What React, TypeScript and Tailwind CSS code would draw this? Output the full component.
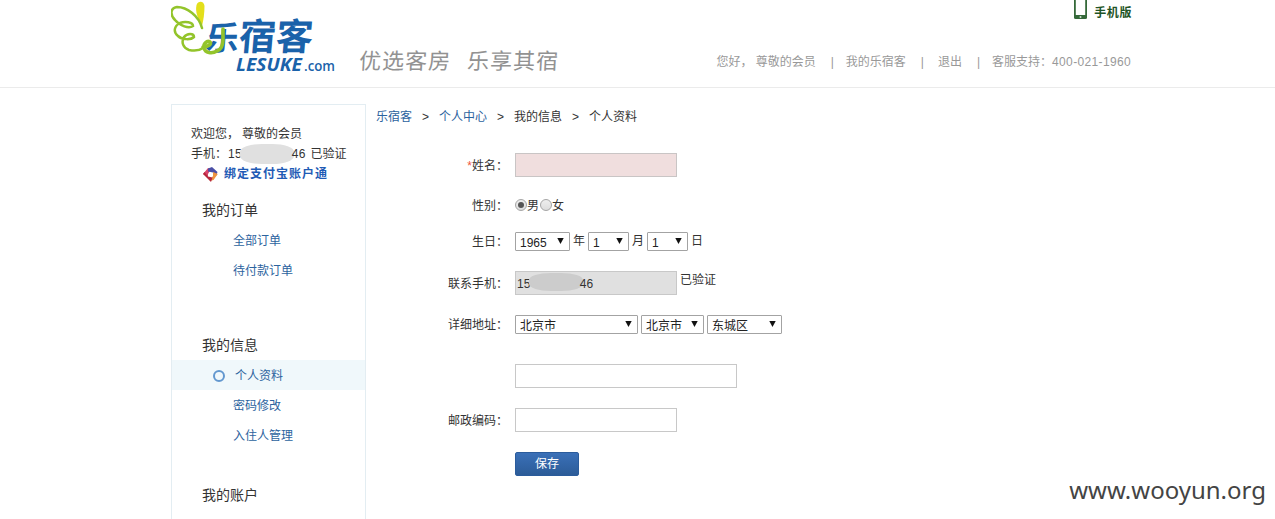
import type { ReactNode } from "react";
import clsx from "clsx";

const menu = [
  { title: "我的订单", items: ["全部订单", "待付款订单"], space: "mb-[45px]" },
  { title: "我的信息", items: ["个人资料", "密码修改", "入住人管理"], space: "mb-[30px]" },
  { title: "我的账户", items: [], space: "" },
];

const crumbs = [
  { text: "乐宿客", link: true },
  { text: "个人中心", link: true },
  { text: "我的信息", link: false },
  { text: "个人资料", link: false },
];

function Logo() {
  return (
    <svg width="170" height="80" viewBox="0 0 170 80" className="shrink-0">
      <g fill="#1a62aa" className="font-['Noto_Sans_CJK_SC',sans-serif] font-bold">
        <text transform="translate(34 49.500) skewX(-5)" fontSize="33">乐</text>
        <text transform="translate(67 50) skewX(-5)" fontSize="37">宿客</text>
      </g>
      {/* wing */}
      <path d="M25.500 5C27 .5 33 .5 33.500 6c0 7-1 14-2.500 20C27 19 24 12 25.500 5z" fill="#e3df1b" />
      <g fill="none" stroke="#93c42b" strokeLinecap="round">
        <path
          d="M31 28C28 16 16 7 6 7-1 8-1 15 4 20c5 6 14 9 18 6 0-4-8-5-13-3-6 3-7 9-2 13 4 4 13 4 16 1 0-4-7-4-10 0-3 5-1 11 5 13 5 1 10 1 14-2"
          strokeWidth="2.500"
        />
        <path d="M32 47c5 0 9-3 7-5-3-2-7 2-6 6 1 5 8 6 13 3 5-2 6-6 6-11V29" strokeWidth="3.600" />
      </g>
      <text x="65" y="70.500" fontSize="17" textLength="66" lengthAdjust="spacingAndGlyphs" fill="#1a62aa" className="font-['Open_Sans',sans-serif] font-bold italic">
        LESUKE
      </text>
      <text x="133" y="70.500" fontSize="14" textLength="31" lengthAdjust="spacingAndGlyphs" fill="#1a62aa" className="font-['Open_Sans',sans-serif] font-semibold">
        .com
      </text>
    </svg>
  );
}

function PhoneIcon() {
  return (
    <svg width="13" height="20" viewBox="0 0 13 20">
      <rect x="0" y="-3" width="13" height="22" rx="1.500" fill="#35693a" />
      <rect x="1.800" y="-1" width="9.400" height="16" fill="#fff" />
      <circle cx="6.500" cy="17" r="1" fill="#cfe0cf" />
    </svg>
  );
}

function AlipayIcon() {
  return (
    <svg width="15" height="15" viewBox="0 0 15 15">
      <path d="M0 7 5 1l3 1-3 5v3z" fill="#d9456c" />
      <path d="M5 1.500 9 0l5.500 5-1.500 4-3-3.500-5-1z" fill="#4a4fa6" />
      <path d="m14.800 7-4.300 6-4 1 3.500-5V5z" fill="#ef9440" />
      <path d="m0 7 1.500-2L5 9.500l4.500 1L8 15z" fill="#b5283c" />
    </svg>
  );
}

function Num({ children }: { children: ReactNode }) {
  return <span className="tracking-[0.200px]">{children}</span>;
}

function Select({ value, width }: { value: string; width: string }) {
  return (
    <span className={clsx("relative inline-flex h-[19px]", width)}>
      <select className="h-full w-full appearance-none rounded-[1px] border border-[#a3a3a3] bg-white pt-0.5 pl-1 text-[12px] leading-4 text-[#222]">
        <option>{value}</option>
      </select>
      <svg width="7" height="6" viewBox="0 0 7 6" className="absolute top-[6px] right-[6px]">
        <path d="M.300 0h6.400L3.500 6z" fill="#111" />
      </svg>
    </span>
  );
}

function Radio({ checked }: { checked?: boolean }) {
  return (
    <span className="flex size-3 items-center justify-center rounded-full border border-[#a5a5a5] bg-linear-to-b from-[#eee] to-[#ddd]">
      {checked && <span className="size-1.5 rounded-full bg-[#555]" />}
    </span>
  );
}

function Row({ label, required, className, children }: { label?: string; required?: boolean; className: string; children: ReactNode }) {
  return (
    <div className={clsx("flex items-center", className)}>
      <label className="mr-[7px] w-[133px] shrink-0 pt-0.5 text-right leading-[18px]">
        {required && <span className="text-[#f0553c]">*</span>}
        {label}
      </label>
      {children}
    </div>
  );
}

export default function App() {
  return (
    <div className="relative h-[519px] overflow-hidden bg-white font-['Liberation_Sans','Noto_Sans_CJK_SC',sans-serif] text-[12px] leading-5 text-[#333]">
      <header className="h-[88px] border-b border-[#ebebeb]">
        <div className="ml-[171px] flex w-[960px]">
          <Logo />
          <div className="mt-[46px] ml-[18px] -skew-x-3 text-[22px] leading-8 font-normal tracking-[1px] whitespace-nowrap text-[#929292]">
            优选客房<span className="ml-4">乐享其宿</span>
          </div>
          <div className="ml-auto flex flex-col items-end">
            <div className="flex h-[52px] items-start gap-[7px]">
              <PhoneIcon />
              <span className="mt-[3px] -mr-px font-bold tracking-[0.600px] text-[#1f5426]">手机版</span>
            </div>
            <nav className="flex whitespace-nowrap text-[#999]">
              <span>您好，</span>
              <span className="ml-[3px]">尊敬的会员</span>
              <span className="mr-3 ml-[15px]">|</span>
              <span>我的乐宿客</span>
              <span className="mr-[14px] ml-[15px]">|</span>
              <span>退出</span>
              <span className="mr-[12px] ml-[15px]">|</span>
              <span>客服支持：</span>
              <span className="tracking-[0.350px]">400-021-1960</span>
            </nav>
          </div>
        </div>
      </header>

      <div className="ml-[171px] flex w-[960px]">
        <aside className="mt-4 h-[430px] w-[195px] shrink-0 border border-[#e3edf2] pt-[19px]">
          <div className="mb-[11px] pl-[19px]">
            <div className="flex">
              欢迎您，<span className="ml-[3px]">尊敬的会员</span>
            </div>
            <div className="flex items-center">
              手机：<span className="ml-px"><Num>15</Num></span>
              <span className="-ml-0.5 h-5 w-[54px] rounded-[40%] bg-[#e0e0e0]" />
              <span className="-ml-0.5"><Num>46</Num></span>
              <span className="ml-[5px]">已验证</span>
            </div>
            <div className="flex items-center gap-[6px] pl-3 font-bold tracking-[1px] text-[#1f5bb5]">
              <AlipayIcon />
              绑定支付宝账户通
            </div>
          </div>
          {menu.map((group) => (
            <div key={group.title} className={group.space}>
              <h3 className="pl-[30px] text-[14px] leading-[30px]">{group.title}</h3>
              {group.items.map((item) => {
                const active = item === "个人资料";
                return (
                  <a key={item} className={clsx("flex h-[30px] items-center pt-0.5 text-[#2c639e]", active ? "bg-[#f0f8fb] pl-[41px]" : "pl-[61px]")}>
                    {active && <span className="mr-[10px] size-3 rounded-full border-2 border-[#6398cf]" />}
                    {item}
                  </a>
                );
              })}
            </div>
          ))}
        </aside>

        <main className="ml-[9px] flex-1 pt-[19px]">
          <div className="flex pl-px">
            {crumbs.map((crumb, i) => (
              <span key={crumb.text} className="flex">
                {i > 0 && <span className="mx-[10px] w-[7px]">&gt;</span>}
                <span className={crumb.link ? "text-[#2c639e]" : ""}>{crumb.text}</span>
              </span>
            ))}
          </div>

          <Row label="姓名：" required className="mt-[26px] h-6">
            <input className="h-6 w-[162px] border border-[#c9c5c5] bg-[#f0dede]" />
          </Row>
          <Row label="性别：" className="mt-[18px] h-5">
            <Radio checked />
            <span className="mr-px pt-0.5">男</span>
            <Radio />
            <span className="pt-0.5">女</span>
          </Row>
          <Row label="生日：" className="mt-4 h-5">
            <Select value="1965" width="w-[55px]" />
            <span className="mx-[3px]">年</span>
            <Select value="1" width="w-[41px]" />
            <span className="mx-[3px]">月</span>
            <Select value="1" width="w-[41px]" />
            <span className="ml-[3px]">日</span>
          </Row>
          <Row label="联系手机：" className="mt-5 h-6">
            <div className="flex h-6 w-[162px] items-center border border-[#c8c8c8] bg-[#e0e0e0] pt-px pl-px">
              <Num>15</Num>
              <span className="-ml-0.5 mb-1 h-[18px] w-[54px] rounded-[40%] bg-[#cccccc]" />
              <span className="-ml-[3px]"><Num>46</Num></span>
            </div>
            <span className="mb-1.5 ml-[3px]">已验证</span>
          </Row>
          <Row label="详细地址：" className="mt-[19px] h-5">
            <div className="flex gap-[3px]">
              <Select value="北京市" width="w-[123px]" />
              <Select value="北京市" width="w-[63px]" />
              <Select value="东城区" width="w-[75px]" />
            </div>
          </Row>
          <Row className="mt-[30px] h-6">
            <input className="h-6 w-[222px] border border-[#c8c8c8] bg-white" />
          </Row>
          <Row label="邮政编码：" className="mt-5 h-6">
            <input className="h-6 w-[162px] border border-[#c8c8c8] bg-white" />
          </Row>
          <Row className="mt-5 h-6">
            <button className="h-6 w-16 rounded-[2px] border border-[#2b5c9c] bg-linear-to-b from-[#3a70b8] to-[#2c5c98] pt-px leading-[21px] text-white">
              保存
            </button>
          </Row>
        </main>
      </div>

      <div className="absolute top-[472px] right-[9px] font-['Noto_Sans',sans-serif] text-[24px] leading-9 text-[#444]">www.wooyun.org</div>
    </div>
  );
}
